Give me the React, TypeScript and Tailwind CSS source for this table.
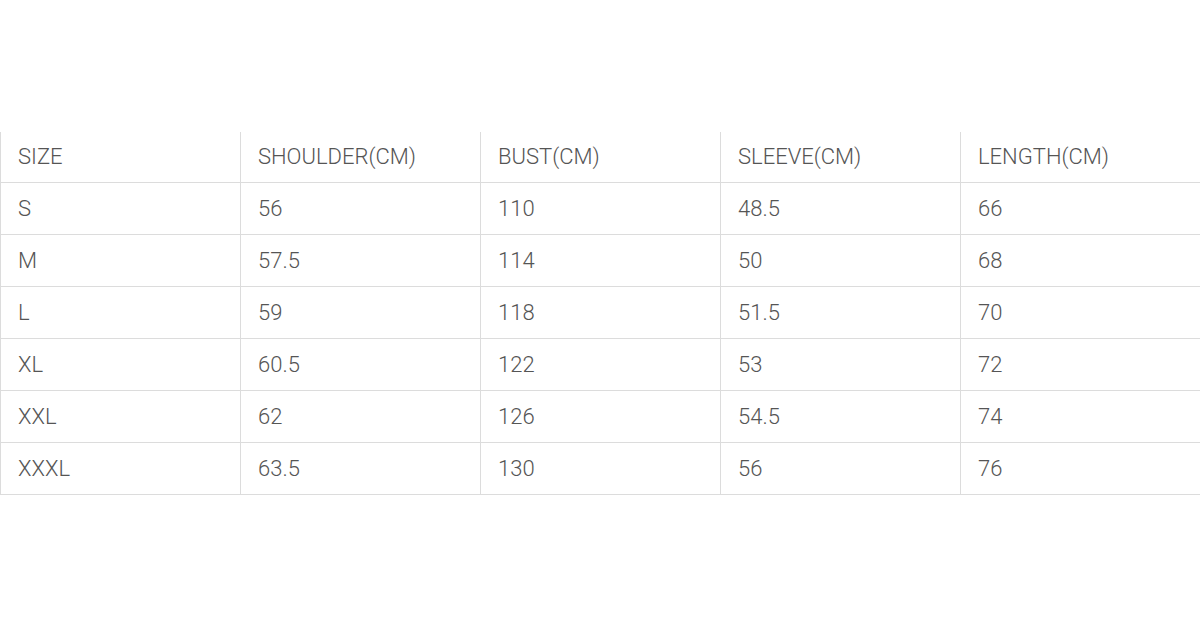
const headers = ["SIZE", "SHOULDER(CM)", "BUST(CM)", "SLEEVE(CM)", "LENGTH(CM)"];

const rows = [
  ["S", "56", "110", "48.5", "66"],
  ["M", "57.5", "114", "50", "68"],
  ["L", "59", "118", "51.5", "70"],
  ["XL", "60.5", "122", "53", "72"],
  ["XXL", "62", "126", "54.5", "74"],
  ["XXXL", "63.5", "130", "56", "76"],
];

const App = () => {
  return (
    <div className="w-[1200px] h-[628px] bg-white pt-[132px] font-['Roboto',sans-serif] text-[#555]">
      <table className="w-[1200px] table-fixed border-collapse">
        <thead>
          <tr className="border-b border-[#dcdcdc]">
            {headers.map((h) => (
              <th
                key={h}
                className="w-[240px] h-[50px] pl-[17px] text-left font-light text-[22px] border-l border-[#dcdcdc]"
              >
                {h}
              </th>
            ))}
          </tr>
        </thead>
        <tbody>
          {rows.map((r) => (
            <tr key={r[0]} className="border-b border-[#dcdcdc]">
              {r.map((c, i) => (
                <td key={i} className="h-[52px] pl-[17px] font-light text-[22px] border-l border-[#dcdcdc]">
                  {c}
                </td>
              ))}
            </tr>
          ))}
        </tbody>
      </table>
    </div>
  );
};

export default App;
